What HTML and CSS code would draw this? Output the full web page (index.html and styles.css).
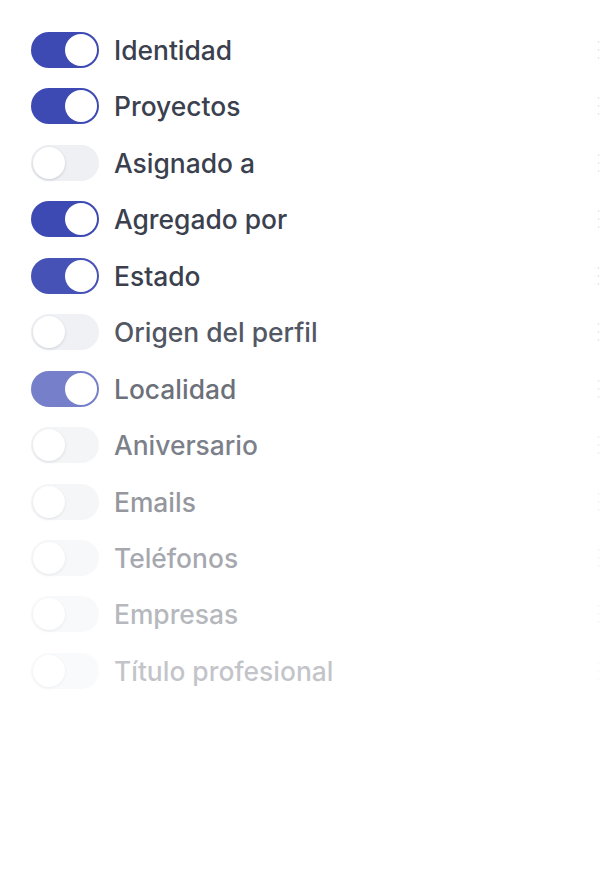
FILE: index.html
```html
<!DOCTYPE html>
<html lang="es">
<head>
<meta charset="utf-8">
<link rel="stylesheet" href="styles.css">
</head>
<body>
<ul class="list">
  <li class="row r1"><span class="toggle on"><span class="knob"></span></span><span class="label">Identidad</span><span class="grip"></span></li>
  <li class="row r2"><span class="toggle on"><span class="knob"></span></span><span class="label">Proyectos</span><span class="grip"></span></li>
  <li class="row r3"><span class="toggle"><span class="knob"></span></span><span class="label">Asignado a</span><span class="grip"></span></li>
  <li class="row r4"><span class="toggle on"><span class="knob"></span></span><span class="label">Agregado por</span><span class="grip"></span></li>
  <li class="row r5"><span class="toggle on"><span class="knob"></span></span><span class="label">Estado</span><span class="grip"></span></li>
  <li class="row r6"><span class="toggle"><span class="knob"></span></span><span class="label">Origen del perfil</span><span class="grip"></span></li>
  <li class="row r7"><span class="toggle on"><span class="knob"></span></span><span class="label">Localidad</span><span class="grip"></span></li>
  <li class="row r8"><span class="toggle"><span class="knob"></span></span><span class="label">Aniversario</span><span class="grip"></span></li>
  <li class="row r9"><span class="toggle"><span class="knob"></span></span><span class="label">Emails</span><span class="grip"></span></li>
  <li class="row r10"><span class="toggle"><span class="knob"></span></span><span class="label">Teléfonos</span><span class="grip"></span></li>
  <li class="row r11"><span class="toggle"><span class="knob"></span></span><span class="label">Empresas</span><span class="grip"></span></li>
  <li class="row r12"><span class="toggle"><span class="knob"></span></span><span class="label">Título profesional</span><span class="grip"></span></li>
</ul>
</body>
</html>
```
FILE: styles.css
```css
html, body {
  margin: 0;
  padding: 0;
  background: #ffffff;
}
body {
  width: 600px;
  height: 881px;
  overflow: hidden;
  font-family: Inter, "Noto Sans", sans-serif;
}
.list {
  list-style: none;
  margin: 0;
  padding: 32px 0 0 31px;
  display: flex;
  flex-direction: column;
  gap: 20.45px;
}
.row {
  display: flex;
  align-items: center;
  height: 36px;
  gap: 15px;
}
.toggle {
  flex: none;
  width: 68px;
  height: 36px;
  border-radius: 18px;
  background: #eef0f3;
  display: flex;
  align-items: center;
  padding: 2px;
  box-sizing: border-box;
}
.knob {
  width: 32px;
  height: 32px;
  border-radius: 50%;
  background: #ffffff;
  box-shadow: 0 1px 3px rgba(30, 40, 60, 0.18);
}
.toggle.on {
  background: #3d4ab4;
  justify-content: flex-end;
}
.toggle.on .knob {
  box-shadow: none;
}
.label {
  flex: 1;
  font-size: 26.4px;
  font-weight: 500;
  color: #3a404e;
  letter-spacing: 0;
}
.grip {
  flex: none;
  width: 3px;
  height: 24px;
  margin-right: 0;
  background-image: radial-gradient(circle, #d3d6de 0.8px, transparent 1.2px);
  background-size: 3px 8px;
  opacity: 0.6;
}
.r5 .toggle.on { background: #4752b7; }
.r6 { opacity: 0.88; }
.r7 { opacity: 0.7; }
.r7 .label { color: #2f3442; }
.r8 { opacity: 0.66; }
.r9 { opacity: 0.54; }
.r10 { opacity: 0.45; }
.r11 { opacity: 0.37; }
.r12 { opacity: 0.3; }
```
